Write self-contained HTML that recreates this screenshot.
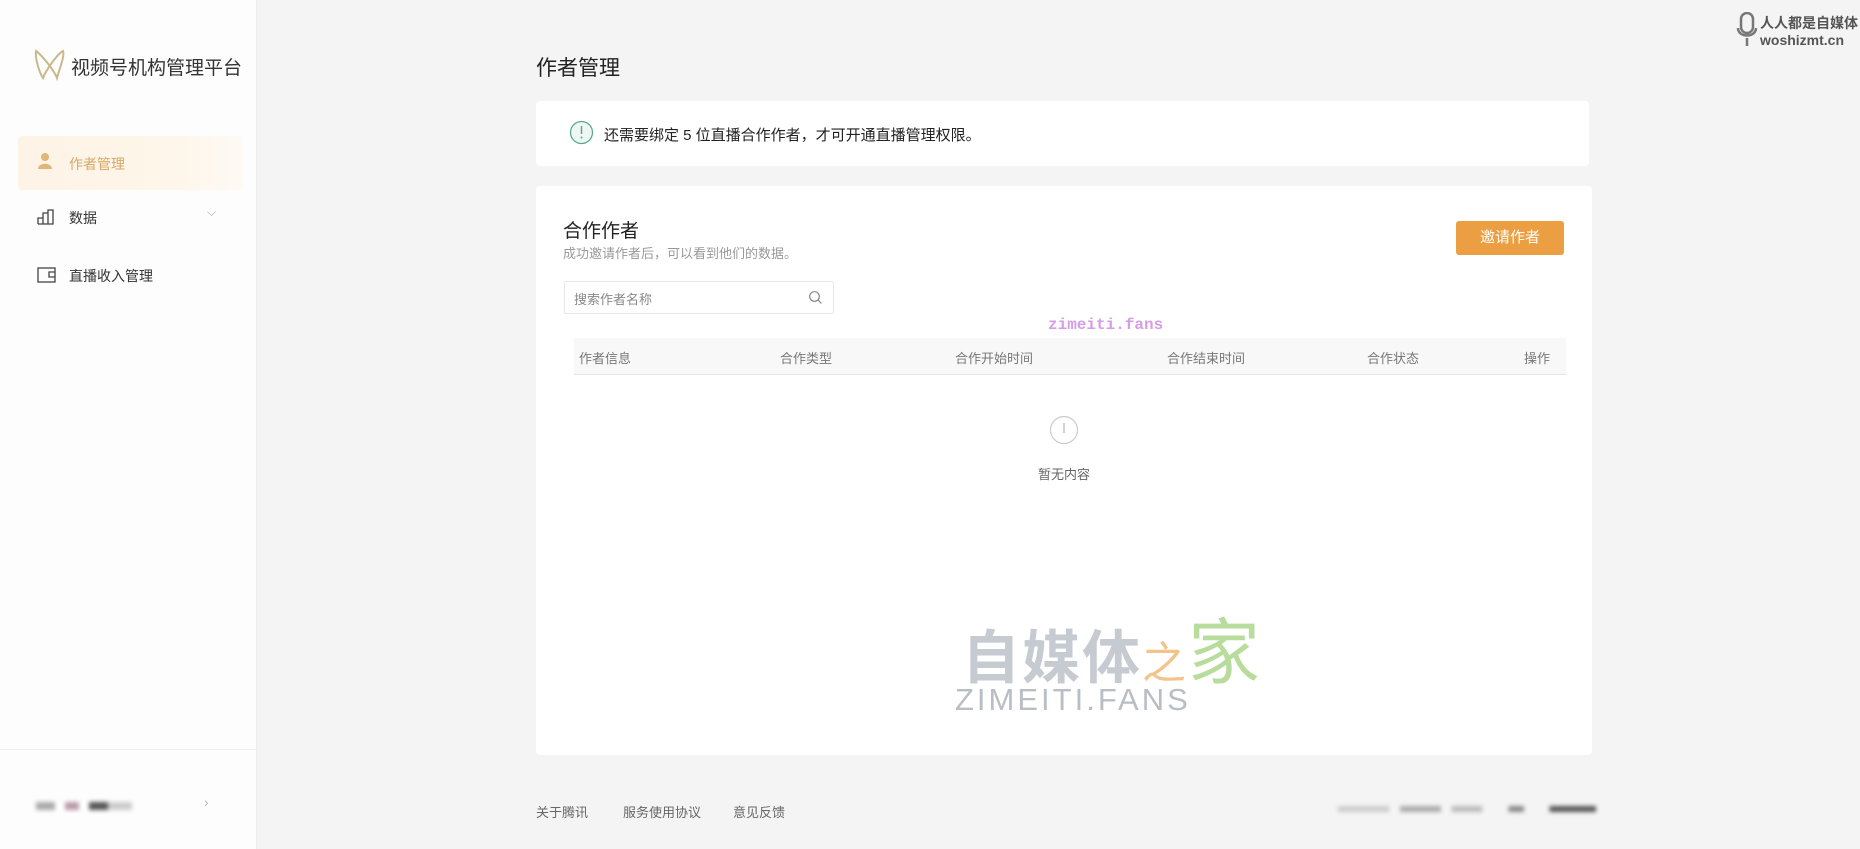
<!DOCTYPE html>
<html><head><meta charset="utf-8">
<style>
*{margin:0;padding:0;box-sizing:border-box}
body{width:1860px;height:849px;overflow:hidden;background:#f4f4f4;font-family:"Liberation Sans","Noto Sans CJK SC",sans-serif;color:#333;position:relative}
.a{position:absolute;white-space:nowrap}
.side{left:0;top:0;width:257px;height:849px;background:#fdfdfd;border-right:1px solid #eee}
.card{background:#fff;border-radius:4px}
.th{font-size:13px;color:#777}
.blur{background:#999;filter:blur(2px);height:8px}
</style></head><body>
<div class="a side"></div>
<svg class="a" style="left:33px;top:48px" width="34" height="34" viewBox="0 0 34 34"><path d="M3 3 C10 8,22 24,24 30 C26 22,32 8,30 3 C24 6,12 24,10 30 C6 24,2 10,3 3Z" fill="none" stroke="#c9b98a" stroke-width="2"/></svg>
<div class="a" style="left:71px;top:53px;font-size:19px;color:#333">视频号机构管理平台</div>
<div class="a" style="left:18px;top:136px;width:225px;height:54px;background:linear-gradient(90deg,#fdf3e6,#fef6ea 70%,#fdfaf5);border-radius:4px"></div>
<svg class="a" style="left:37px;top:152px" width="18" height="18" viewBox="0 0 18 18"><circle cx="8" cy="5" r="4" fill="#e0b679"/><path d="M1 17 C1 10,15 10,15 17Z" fill="#e0b679"/></svg>
<div class="a" style="left:69px;top:154px;font-size:14px;color:#d8a866">作者管理</div>
<svg class="a" style="left:37px;top:209px" width="19" height="16" viewBox="0 0 19 16"><path d="M1 15V9h5v6M6 15V4h5v11M11 15V1h5v14H1" fill="none" stroke="#444" stroke-width="1.3"/></svg>
<div class="a" style="left:69px;top:208px;font-size:14px">数据</div>
<div class="a" style="left:207px;top:205px;font-size:12px;color:#aaa">⌵</div>
<svg class="a" style="left:37px;top:267px" width="19" height="16" viewBox="0 0 19 16"><rect x="1" y="1" width="17" height="14" fill="none" stroke="#444" stroke-width="1.3"/><path d="M18 5h-6v5h6" fill="none" stroke="#444" stroke-width="1.3"/></svg>
<div class="a" style="left:69px;top:266px;font-size:14px">直播收入管理</div>
<div class="a" style="left:0;top:749px;width:257px;height:1px;background:#eee"></div>
<div class="a blur" style="left:36px;top:802px;width:96px;background:linear-gradient(90deg,#aaa 20%,#fff 20% 30%,#b9a 30% 45%,#fff 45% 55%,#555 55% 75%,#ccc 75%)"></div>
<div class="a" style="left:204px;top:794px;color:#bbb;font-size:14px">›</div>

<div class="a" style="left:536px;top:52px;font-size:21px;color:#222">作者管理</div>
<div class="a card" style="left:536px;top:101px;width:1053px;height:65px"></div>
<svg class="a" style="left:569px;top:120px" width="25" height="25" viewBox="0 0 25 25"><circle cx="12.5" cy="12.5" r="11" fill="#eef7f4" stroke="#5aaa90" stroke-width="1.3"/><path d="M12.5 6v8" stroke="#5aaa90" stroke-width="1.5"/><circle cx="12.5" cy="17.5" r="1" fill="#5aaa90"/></svg>
<div class="a" style="left:604px;top:124px;font-size:15px;color:#222">还需要绑定 5 位直播合作作者，才可开通直播管理权限。</div>

<div class="a card" style="left:536px;top:186px;width:1056px;height:569px"></div>
<div class="a" style="left:563px;top:216px;font-size:19px;color:#222">合作作者</div>
<div class="a" style="left:563px;top:243px;font-size:13px;color:#999">成功邀请作者后，可以看到他们的数据。</div>
<div class="a" style="left:1456px;top:221px;width:108px;height:34px;background:#eb9f42;border-radius:3px;color:#fff;font-size:15px;text-align:center;line-height:34px">邀请作者</div>
<div class="a" style="left:564px;top:281px;width:270px;height:33px;border:1px solid #e6e6e6;border-radius:2px"></div>
<div class="a" style="left:574px;top:289px;font-size:13px;color:#888">搜索作者名称</div>
<svg class="a" style="left:808px;top:290px" width="15" height="15" viewBox="0 0 15 15"><circle cx="6.5" cy="6.5" r="4.8" fill="none" stroke="#888" stroke-width="1.2"/><path d="M10 10l3.5 3.5" stroke="#888" stroke-width="1.2"/></svg>
<div class="a" style="left:1048px;top:316px;font-size:16px;color:#d59de6;font-family:'Liberation Mono',monospace;font-weight:bold">zimeiti.fans</div>
<div class="a" style="left:574px;top:338px;width:992px;height:37px;background:#f8f8f8;border-bottom:1px solid #e5e5e5"></div>
<div class="a th" style="left:579px;top:348px">作者信息</div>
<div class="a th" style="left:780px;top:348px">合作类型</div>
<div class="a th" style="left:955px;top:348px">合作开始时间</div>
<div class="a th" style="left:1167px;top:348px">合作结束时间</div>
<div class="a th" style="left:1367px;top:348px">合作状态</div>
<div class="a th" style="left:1524px;top:348px">操作</div>
<svg class="a" style="left:1049px;top:415px" width="30" height="30" viewBox="0 0 30 30"><circle cx="15" cy="15" r="13.5" fill="none" stroke="#ccc" stroke-width="1.2"/><path d="M15 8v10" stroke="#bbb" stroke-width="1.3"/></svg>
<div class="a" style="left:1038px;top:464px;font-size:13px;color:#666">暂无内容</div>
<div class="a" style="left:962px;top:594px;font-size:58px;font-weight:bold;color:#c6cbd1;letter-spacing:2px">自媒体<span style="color:#f3c48a;font-weight:normal;font-size:44px">之</span><span style="color:#b7dc9b;font-size:72px;font-weight:normal">家</span></div>
<div class="a" style="left:955px;top:682px;font-size:31px;color:#b8bec4;letter-spacing:3px">ZIMEITI.FANS</div>

<div class="a" style="left:536px;top:802px;font-size:13px;color:#666">关于腾讯</div>
<div class="a" style="left:623px;top:802px;font-size:13px;color:#666">服务使用协议</div>
<div class="a" style="left:733px;top:802px;font-size:13px;color:#666">意见反馈</div>
<div class="a blur" style="left:1338px;top:806px;width:258px;height:6px;background:linear-gradient(90deg,#ccc 0 20%,#f4f4f4 20% 24%,#aaa 24% 40%,#f4f4f4 40% 44%,#bbb 44% 56%,#f4f4f4 56% 66%,#888 66% 72%,#f4f4f4 72% 82%,#555 82% 98%)"></div>
<svg class="a" style="left:1736px;top:12px" width="22" height="36" viewBox="0 0 22 36"><rect x="5" y="1" width="12" height="20" rx="6" fill="none" stroke="#777" stroke-width="2.5"/><path d="M2 16c0 10 18 10 18 0M11 26v8" fill="none" stroke="#777" stroke-width="2.5"/></svg>
<div class="a" style="left:1760px;top:13px;font-size:14px;font-weight:bold;color:#555">人人都是自媒体</div>
<div class="a" style="left:1760px;top:32px;font-size:14px;font-weight:bold;color:#555">woshizmt.cn</div>
</body></html>
